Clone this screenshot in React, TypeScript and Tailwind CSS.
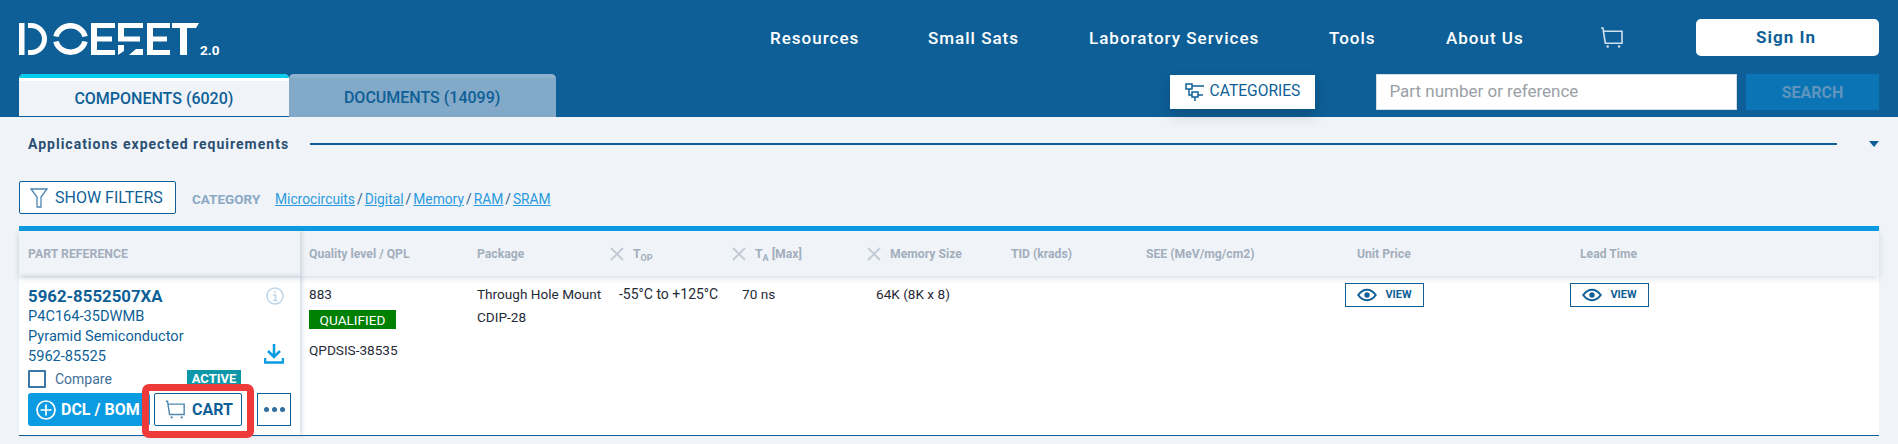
import React from "react";

const Cart = ({ className = "" }: { className?: string }) => (
  <svg viewBox="0 0 24 22" className={className} fill="none" stroke="currentColor" strokeWidth="1.700">
    <path d="M1 1h2l2.500 16H23V4.500H3.600" />
    <circle cx="8" cy="20.500" r="1.300" fill="currentColor" stroke="none" />
    <circle cx="20" cy="20.500" r="1.300" fill="currentColor" stroke="none" />
  </svg>
);

const Eye = () => (
  <svg viewBox="0 0 24 16" className="w-[20px] h-[14px] text-[#0e5f97]" fill="none" stroke="currentColor" strokeWidth="2.400">
    <path d="M1.500 8c3-4.300 6.500-6.300 10.500-6.300S19.500 3.700 22.500 8c-3 4.300-6.500 6.300-10.500 6.300S4.500 12.300 1.500 8z" />
    <circle cx="12" cy="8" r="3.200" fill="currentColor" stroke="none" />
  </svg>
);

const X = () => (
  <svg viewBox="0 0 14 14" className="w-[14px] h-[14px] text-[#c3cbd6]" fill="none" stroke="currentColor" strokeWidth="2">
    <path d="M1 1l12 12M13 1L1 13" />
  </svg>
);

const Logo = () => (
  <svg viewBox="0 0 180 32" className="w-[180px] h-[32px] text-white" fill="currentColor">
    <rect x="0" y="0" width="5.500" height="32" />
    <path d="M9 0h3a16 16 0 0 1 0 32H9v-5h3a11 11 0 0 0 0-22H9z" />
    <g fill="none" stroke="currentColor" strokeWidth="5.500">
      <path d="M37 13.500A14.800 13.300 0 0 1 66 13.500" />
      <path d="M37 18.500A14.800 13.300 0 0 0 66 18.500" />
    </g>
    <path d="M72 0h24v5H78v8.500h15v5H78V27h18v5H72z" />
    <path d="M99 0h25v5h-19v8.500h16v5H99z" />
    <path d="M99 22h6l0 6-6 4zM110 32l7-6h7v6z" />
    <path d="M128 0h23v5h-17v8.500h14v5h-14V27h17v5h-23z" />
    <path d="M153 0h27l-3 5h-9v27h-7V5h-8z" />
  </svg>
);

const Th = ({ w, children, x }: { w: string; children: React.ReactNode; x?: boolean }) => (
  <div className={`${w} shrink-0 flex items-center gap-[9px] text-[12.200px] font-bold text-[#a3aebd]`}>
    {x && <X />}
    <span>{children}</span>
  </div>
);

const View = () => (
  <button className="w-[79px] h-[24px] border border-[#0e5f97] flex items-center justify-center gap-[8px] text-[11px] font-bold text-[#0e5f97]">
    <Eye />
    VIEW
  </button>
);

export default function App() {
  return (
    <div className="w-[1898px] h-[444px] overflow-hidden bg-[#f0f4f8] font-['Roboto',sans-serif]">
      <header className="h-[117px] bg-[#0e5f97] px-[19px] relative">
        <div className="h-[74px] flex items-start">
          <div className="pt-[23px] flex items-end gap-[1px] w-[752px]">
            <Logo />
            <span className="text-white text-[13.500px] font-bold leading-[10px]">2.0</span>
          </div>
          <nav className="flex items-center h-[56px] pt-[19px] text-white font-medium text-[17px] tracking-[1px]">
            <a className="w-[158px] pt-[2px]">Resources</a>
            <a className="w-[161px] pt-[2px]">Small Sats</a>
            <a className="w-[240px] pt-[2px]">Laboratory Services</a>
            <a className="w-[117px] pt-[2px]">Tools</a>
            <a className="w-[154px] pt-[2px]">About Us</a>
            <span className="w-[96px]"><Cart className="w-[23px] h-[21px] text-[#cfe0ee]" /></span>
            <button className="w-[183px] h-[37px] bg-white rounded-[5px] text-[#0e5f97] font-bold pt-[1px] pr-[3px]">Sign In</button>
          </nav>
        </div>
        <div className="flex h-[43px]">
          <div className="w-[270px] border-b border-[#0e5f97] rounded-t-[5px] overflow-hidden bg-[#f0f4f8] flex flex-col">
            <div className="h-[4px] bg-[#04cdec]" />
            <div className="h-[3px] bg-white" />
            <div className="flex-1 flex items-center justify-center text-[16px] font-medium text-[#0e5f97]">COMPONENTS (6020)</div>
          </div>
          <div className="w-[267px] rounded-t-[5px] overflow-hidden bg-[#82a9c8] flex flex-col text-[16px] font-medium text-[#0e5f97]">
            <div className="h-[4px] bg-[#8db2ce]" />
            <div className="flex-1 flex items-center justify-center pt-[1px]">DOCUMENTS (14099)</div>
          </div>
          <button className="ml-[614px] mt-[1px] w-[146px] h-[34px] bg-white shadow-[0_6px_14px_rgba(0,0,0,0.18)] flex items-center justify-center gap-[5px] text-[#0e5f97] text-[15.600px]">
            <svg viewBox="0 0 20 20" className="w-[20px] h-[20px]" fill="none" stroke="currentColor" strokeWidth="1.500">
              <rect x="1" y="2" width="6" height="5" />
              <rect x="7" y="10" width="6" height="5" />
              <path d="M7 4h12M4 7v6h3M13 13h5M10 15v4" />
            </svg>
            CATEGORIES
          </button>
          <div className="ml-[61px] w-[361px] h-[36px] bg-white border border-[#d4dce6] flex items-center px-[12px] text-[#9aa0a6] text-[17px]">Part number or reference</div>
          <button className="ml-[9px] w-[133px] h-[36px] bg-[#0a74b4] text-[#6095bf] font-bold text-[16px] pt-[1px]">SEARCH</button>
        </div>
      </header>

      <main className="px-[19px]">
        <div className="h-[64px] flex items-center pb-[16px] pt-[6px]">
          <span className="ml-[9px] w-[282px] shrink-0 text-[14px] font-bold tracking-[1px] text-[#2a4f72]">Applications expected requirements</span>
          <div className="w-[1527px] h-[2px] bg-[#0e5f97]" />
          <div className="ml-[32px] w-0 h-0 border-x-[5px] border-x-transparent border-t-[6px] border-t-[#0e5f97]" />
        </div>

        <div className="flex items-center h-[33px]">
          <button className="w-[157px] h-[33px] border border-[#0e5f97] rounded-[2px] bg-white flex items-center pl-[10px] gap-[7px] text-[16px] text-[#0e5f97]">
            <svg viewBox="0 0 18 20" className="w-[18px] h-[20px] text-[#4f86b0]" fill="none" stroke="currentColor" strokeWidth="1.300">
              <path d="M1 1h16l-6 8v10H7V9z" />
            </svg>
            <span className="pt-[1px]">SHOW FILTERS</span>
          </button>
          <span className="ml-[16px] w-[83px] mt-[3px] text-[13.500px] font-bold text-[#8aa9c5]">CATEGORY</span>
          <span className="mt-[3px] flex text-[13.800px] text-[#2a5f8c]">
            <a className="underline text-[#2a9ae0]">Microcircuits</a>
            <span className="mx-[2px]">/</span>
            <a className="underline text-[#2a9ae0]">Digital</a>
            <span className="mx-[2px]">/</span>
            <a className="underline text-[#2a9ae0]">Memory</a>
            <span className="mx-[2px]">/</span>
            <a className="underline text-[#2a9ae0]">RAM</a>
            <span className="mx-[2px]">/</span>
            <a className="underline text-[#2a9ae0]">SRAM</a>
          </span>
        </div>

        <div className="mt-[12px] border-t-[5px] border-[#0a9be3] relative">
          <div className="flex h-[45px] items-center shadow-[0_2px_6px_rgba(90,120,150,0.25)] relative">
            <div className="w-[281px] h-full flex items-center pl-[9px] pt-[2px] text-[12.300px] font-bold text-[#a3aebd] shadow-[2px_0_4px_rgba(90,120,150,0.25)]">PART REFERENCE</div>
            <div className="flex pl-[9px] pt-[2px]">
              <Th w="w-[168px]">Quality level / QPL</Th>
              <Th w="w-[133px]">Package</Th>
              <Th w="w-[122px]" x><span>T<sub className="text-[9px]">OP</sub></span></Th>
              <Th w="w-[135px]" x><span>T<sub className="text-[9px]">A</sub> [Max]</span></Th>
              <Th w="w-[144px]" x>Memory Size</Th>
              <Th w="w-[135px]">TID (krads)</Th>
              <Th w="w-[211px]">SEE (MeV/mg/cm2)</Th>
              <Th w="w-[223px]">Unit Price</Th>
              <Th w="w-[100px]">Lead Time</Th>
            </div>
          </div>
          <div className="flex h-[160px] bg-white border-b border-[#0e5f97]">
            <div className="w-[281px] shrink-0 pl-[9px] pt-[9px] relative shadow-[2px_0_4px_rgba(90,120,150,0.25)]">
              <div className="flex justify-between pr-[16px]">
                <div className="text-[#0e5f97] text-[14.600px] leading-[20px] pt-[1px]">
                  <div className="text-[16.800px] font-bold">5962-8552507XA</div>
                  <div>P4C164-35DWMB</div>
                  <div>Pyramid Semiconductor</div>
                  <div>5962-85525</div>
                </div>
                <div className="flex flex-col justify-between items-end pt-[2px] pb-[2px]">
                  <svg viewBox="0 0 18 18" className="w-[18px] h-[18px] text-[#bcd4e8]" fill="none" stroke="currentColor" strokeWidth="1.500">
                    <circle cx="9" cy="9" r="8" />
                    <path d="M7 8h2.500v5M7 13.500h4.500" />
                    <circle cx="9" cy="5" r="1" fill="currentColor" stroke="none" />
                  </svg>
                  <svg viewBox="0 0 20 20" className="w-[20px] h-[20px] text-[#0a9be3]" fill="none" stroke="currentColor" strokeWidth="2.500">
                    <path d="M10 0v12M4 7l6 6 6-6M1 14v4.500h18V14" />
                  </svg>
                </div>
              </div>
              <div className="mt-[4px] flex items-center h-[18px]">
                <div className="w-[18px] h-[18px] border-2 border-[#3a77a6] rounded-[1px]" />
                <span className="ml-[9px] w-[132px] text-[14px] text-[#3f6f98]">Compare</span>
                <span className="w-[54px] h-[18px] bg-[#0e97a8] text-white text-[13px] font-bold flex items-center justify-center">ACTIVE</span>
              </div>
              <div className="mt-[5px] flex items-center">
                <button className="w-[122px] h-[33px] rounded-[3px] bg-[#0a9be3] text-white text-[16px] font-bold flex items-center pl-[8px] gap-[5px] whitespace-nowrap">
                  <svg viewBox="0 0 20 20" className="w-[20px] h-[20px] shrink-0" fill="none" stroke="currentColor" strokeWidth="1.700">
                    <circle cx="10" cy="10" r="9" />
                    <path d="M10 4.500v11M4.500 10h11" />
                  </svg>
                  DCL / BOM
                </button>
                <button className="ml-[4px] w-[88px] h-[33px] bg-white border border-[#0e5f97] rounded-[2px] flex items-center pl-[10px] gap-[7px] text-[16px] font-bold text-[#0e5f97]">
                  <Cart className="w-[20px] h-[19px] text-[#4f86b0]" />
                  CART
                </button>
                <button className="ml-[15px] w-[34px] h-[33px] border border-[#0e5f97] flex items-center justify-center gap-[3px]">
                  <span className="w-[5px] h-[5px] rounded-full bg-[#2f6f9f]" />
                  <span className="w-[5px] h-[5px] rounded-full bg-[#2f6f9f]" />
                  <span className="w-[5px] h-[5px] rounded-full bg-[#2f6f9f]" />
                </button>
              </div>
              <div className="absolute left-[123px] top-[108px] w-[112px] h-[54px] border-[7px] border-[#ef3a3a] rounded-[7px]" />
            </div>
            <div className="flex pl-[9px] pt-[8px] text-[13.600px] leading-[20px] text-[#1f2a37]">
              <div className="w-[168px]">
                <div>883</div>
                <div className="mt-[6px] w-[87px] h-[19px] bg-[#008000] text-white flex items-center justify-center">QUALIFIED</div>
                <div className="mt-[11px]">QPDSIS-38535</div>
              </div>
              <div className="w-[142px]">
                <div>Through Hole Mount</div>
                <div className="mt-[3px]">CDIP-28</div>
              </div>
              <div className="w-[123px] text-[14px]">-55°C to +125°C</div>
              <div className="w-[134px]">70 ns</div>
              <div className="w-[469px]">64K (8K x 8)</div>
              <div className="w-[225px] -mt-[1px]"><View /></div>
              <div className="-mt-[1px]"><View /></div>
            </div>
          </div>
        </div>
      </main>
    </div>
  );
}
